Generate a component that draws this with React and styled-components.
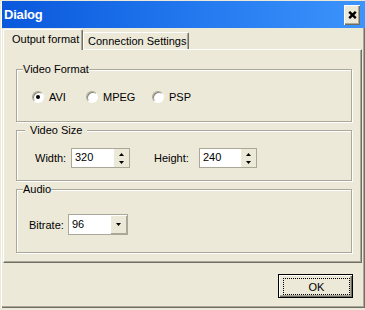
import React, { useState } from "react";
import styled, { createGlobalStyle } from "styled-components";

const GlobalStyle = createGlobalStyle`
  html, body {
    margin: 0;
    padding: 0;
    background: #ece9d8;
  }
  body {
    font-family: "Liberation Sans", Arial, sans-serif;
    font-size: 11px;
    color: #000;
  }
  * {
    box-sizing: border-box;
  }
`;

const Window = styled.div`
  width: 365px;
  height: 308px;
  display: flex;
  flex-direction: column;
  padding: 1px 0 2px 2px;
  background: #ece9d8;
  box-shadow: inset 1px 1px 0 #ece9d8, inset 2px 2px 0 #fff,
    inset -1px -1px 0 #716f64, inset -2px -2px 0 #aca899;
`;

const TitleBar = styled.div`
  flex: none;
  height: 27px;
  display: flex;
  align-items: center;
  justify-content: space-between;
  padding: 0 5px 0 2px;
  background: linear-gradient(to right, #0a58dc 0%, #1f74ec 45%, #3c94fc 100%);
`;

const Title = styled.span`
  color: #fff;
  font-size: 13px;
  font-weight: bold;
  letter-spacing: -0.2px;
`;

const CloseButton = styled.button`
  width: 16px;
  height: 20px;
  padding: 0;
  border: none;
  display: flex;
  align-items: center;
  justify-content: center;
  background: #ece9d8;
  box-shadow: inset 1px 1px 0 #fff, inset -1px -1px 0 #716f64,
    inset -2px -2px 0 #aca899;
`;

const Body = styled.div`
  flex: 1;
  display: flex;
  flex-direction: column;
  padding: 1px 3px 0 1px;
`;

const TabStrip = styled.div`
  flex: none;
  height: 20px;
  display: flex;
  align-items: flex-end;
`;

const Tab = styled.div`
  position: relative;
  z-index: ${(p) => (p.active ? 2 : 1)};
  width: ${(p) => p.w}px;
  height: ${(p) => (p.active ? 21 : 17)}px;
  margin-bottom: ${(p) => (p.active ? -1 : 0)}px;
  padding-left: ${(p) => p.pl}px;
  padding-bottom: ${(p) => (p.active ? 2 : 0)}px;
  display: flex;
  align-items: center;
  white-space: nowrap;
  background: #ece9d8;
  border-top: 1px solid #fff;
  border-left: 1px solid #fff;
  border-right: 1px solid #716f64;
  border-radius: 2px 2px 0 0;
  box-shadow: inset -1px 0 0 #aca899;
  cursor: default;
`;

const Panel = styled.div`
  flex: none;
  height: 214px;
  display: flex;
  flex-direction: column;
  gap: 8px;
  padding: 19px 9px 0 12px;
  border-top: 1px solid #fff;
  border-left: 1px solid #fff;
  border-right: 1px solid #716f64;
  border-bottom: 1px solid #716f64;
  box-shadow: inset -1px -1px 0 #aca899;
`;

const Group = styled.div`
  border: 1px solid #aca899;
  box-shadow: inset 1px 1px 0 #fff, 1px 1px 0 #fff;
  padding-bottom: ${(p) => p.pb}px;
`;

const GroupTitle = styled.div`
  width: fit-content;
  margin: -7px 0 0 ${(p) => p.indent}px;
  padding: 0 ${(p) => p.pad}px;
  line-height: 13px;
  background: #ece9d8;
`;

const Row = styled.div`
  display: flex;
  align-items: center;
  height: ${(p) => p.h}px;
  margin-top: ${(p) => p.mt}px;
  padding-left: ${(p) => p.pl}px;
`;

const RadioItem = styled.label`
  width: ${(p) => p.w}px;
  display: flex;
  align-items: center;
  gap: 5px;
  cursor: default;
`;

const RadioCircle = styled.span`
  flex: none;
  width: 12px;
  height: 12px;
  border-radius: 50%;
  background: #fff;
  border: 1px solid;
  border-color: #aca899 #fff #fff #aca899;
  box-shadow: inset 1px 1px 0 #8a8778;
  display: flex;
  align-items: center;
  justify-content: center;
  &::after {
    content: "";
    display: ${(p) => (p.checked ? "block" : "none")};
    width: 4px;
    height: 4px;
    border-radius: 50%;
    background: #000;
  }
`;

const Label = styled.span`
  width: ${(p) => p.w}px;
  flex: none;
`;

const Field = styled.div`
  flex: none;
  width: ${(p) => p.w}px;
  height: ${(p) => p.h}px;
  display: flex;
  background: #fff;
  border: 1px solid #aca899;
`;

const FieldValue = styled.span`
  flex: 1;
  display: flex;
  align-items: center;
  padding: 0 0 2px 3px;
`;

const SpinButtons = styled.div`
  width: 15px;
  display: flex;
  flex-direction: column;
  align-items: center;
  justify-content: center;
  gap: 5px;
  background: #ece9d8;
`;

const DropButton = styled.div`
  width: 17px;
  display: flex;
  align-items: center;
  justify-content: center;
  background: #ece9d8;
  box-shadow: inset 1px 1px 0 #fff, inset -1px -1px 0 #aca899;
`;

const Footer = styled.div`
  display: flex;
  justify-content: flex-end;
  padding: 11px 9px 0 0;
`;

const Button = styled.button`
  width: 75px;
  height: 24px;
  display: flex;
  padding: 3px 2px 2px 4px;
  border: 1px solid #000;
  background: #ece9d8;
  box-shadow: inset 1px 1px 0 #fff, inset -1px -1px 0 #716f64,
    inset -2px -2px 0 #aca899;
  font-family: inherit;
  font-size: 11px;
  color: #000;
`;

const FocusBox = styled.span`
  flex: 1;
  display: flex;
  align-items: center;
  justify-content: center;
  border: 1px dotted #000;
`;

const Arrow = ({ dir }) => (
  <svg width="5" height="3" viewBox="0 0 5 3">
    <polygon
      points={dir === "up" ? "2.5,0 5,3 0,3" : "0,0 5,0 2.5,3"}
      fill="#000"
    />
  </svg>
);

const Spin = ({ w, value }) => (
  <Field w={w} h={20}>
    <FieldValue>{value}</FieldValue>
    <SpinButtons>
      <Arrow dir="up" />
      <Arrow dir="down" />
    </SpinButtons>
  </Field>
);

const formats = [
  { id: "AVI", w: 54 },
  { id: "MPEG", w: 66 },
  { id: "PSP", w: 60 },
];

export default function App() {
  const [tab, setTab] = useState(0);
  const [format, setFormat] = useState("AVI");

  return (
    <>
      <GlobalStyle />
      <Window>
        <TitleBar>
          <Title>Dialog</Title>
          <CloseButton>
            <svg width="9" height="8" viewBox="0 0 9 8">
              <path
                d="M1.2 0.8 L7.8 7.2 M7.8 0.8 L1.2 7.2"
                stroke="#000"
                strokeWidth="2.4"
              />
            </svg>
          </CloseButton>
        </TitleBar>
        <Body>
          <TabStrip>
            <Tab active={tab === 0} w={80} pl={8} onClick={() => setTab(0)}>
              Output format
            </Tab>
            <Tab active={tab === 1} w={106} pl={4} onClick={() => setTab(1)}>
              Connection Settings
            </Tab>
          </TabStrip>
          <Panel>
            <Group pb={17}>
              <GroupTitle indent={6} pad={0}>
                Video Format
              </GroupTitle>
              <Row h={14} mt={14} pl={15}>
                {formats.map((f) => (
                  <RadioItem key={f.id} w={f.w} onClick={() => setFormat(f.id)}>
                    <RadioCircle checked={format === f.id} />
                    {f.id}
                  </RadioItem>
                ))}
              </Row>
            </Group>
            <Group pb={12}>
              <GroupTitle indent={8} pad={5}>
                Video Size
              </GroupTitle>
              <Row h={20} mt={11} pl={18}>
                <Label w={36}>Width:</Label>
                <Spin w={59} value="320" />
                <Label w={24} />
                <Label w={45}>Height:</Label>
                <Spin w={58} value="240" />
              </Row>
            </Group>
            <Group pb={17}>
              <GroupTitle indent={6} pad={0}>
                Audio
              </GroupTitle>
              <Row h={21} mt={18} pl={12}>
                <Label w={39}>Bitrate:</Label>
                <Field w={60} h={21}>
                  <FieldValue>96</FieldValue>
                  <DropButton>
                    <Arrow dir="down" />
                  </DropButton>
                </Field>
              </Row>
            </Group>
          </Panel>
          <Footer>
            <Button>
              <FocusBox>OK</FocusBox>
            </Button>
          </Footer>
        </Body>
      </Window>
    </>
  );
}
